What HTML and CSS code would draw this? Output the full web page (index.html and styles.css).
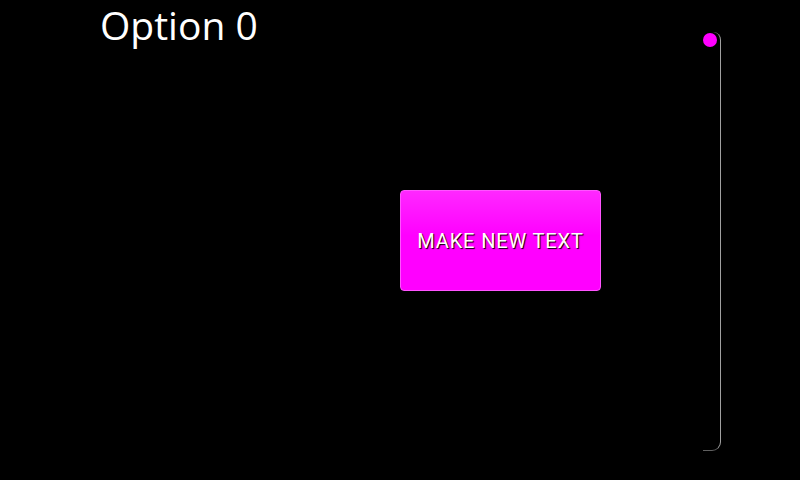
FILE: index.html
```html
<!DOCTYPE html>
<html lang="en">

<head>
    <meta charset="UTF-8">
    <meta name="viewport" content="width=device-width, initial-scale=1.0">
    <title>Options</title>
    <link rel="stylesheet" href="styles.css">
</head>

<body>
    <div class="screen">
        <div class="content">
            <h1 class="title">Option 0</h1>
            <button class="make-btn">MAKE NEW TEXT</button>
        </div>
        <div class="scroll">
            <div class="track"></div>
            <div class="knob"></div>
        </div>
    </div>
</body>

</html>
```

FILE: styles.css
```css
body {
    margin: 0;
    padding: 0;
    background-color: #000;
    font-family: 'Open Sans', 'Noto Sans', sans-serif;
}

.screen {
    display: flex;
    width: 800px;
    height: 480px;
    overflow: hidden;
}

.content {
    flex: 1;
    display: flex;
    flex-direction: column;
    align-items: flex-start;
}

.title {
    margin: 0 0 0 100px;
    font-size: 39px;
    font-weight: normal;
    line-height: 50px;
    color: #fff;
}

.make-btn {
    margin: 140px 0 0 400px;
    width: 201px;
    height: 101px;
    border: 1px solid #ff55ff;
    border-radius: 4px;
    background: linear-gradient(#ff28ff, #ff00ff 45%, #ff00ff);
    color: #fff;
    font-family: Roboto, 'Noto Sans', sans-serif;
    font-size: 20px;
    letter-spacing: 0.85px;
    text-shadow: 1px 1px 1px #000;
    padding: 0;
}

.scroll {
    position: relative;
    width: 18px;
    height: 419px;
    margin: 32px 79px 0 0;
}

.track {
    height: 100%;
    box-sizing: border-box;
    border-right: 1px solid #a0a0a0;
    border-bottom: 1px solid #606060;
    border-radius: 0 8px 9px 0;
}

.knob {
    position: absolute;
    top: 1px;
    left: 0;
    width: 14px;
    height: 14px;
    border-radius: 50%;
    background-color: #ff00ff;
}
```
